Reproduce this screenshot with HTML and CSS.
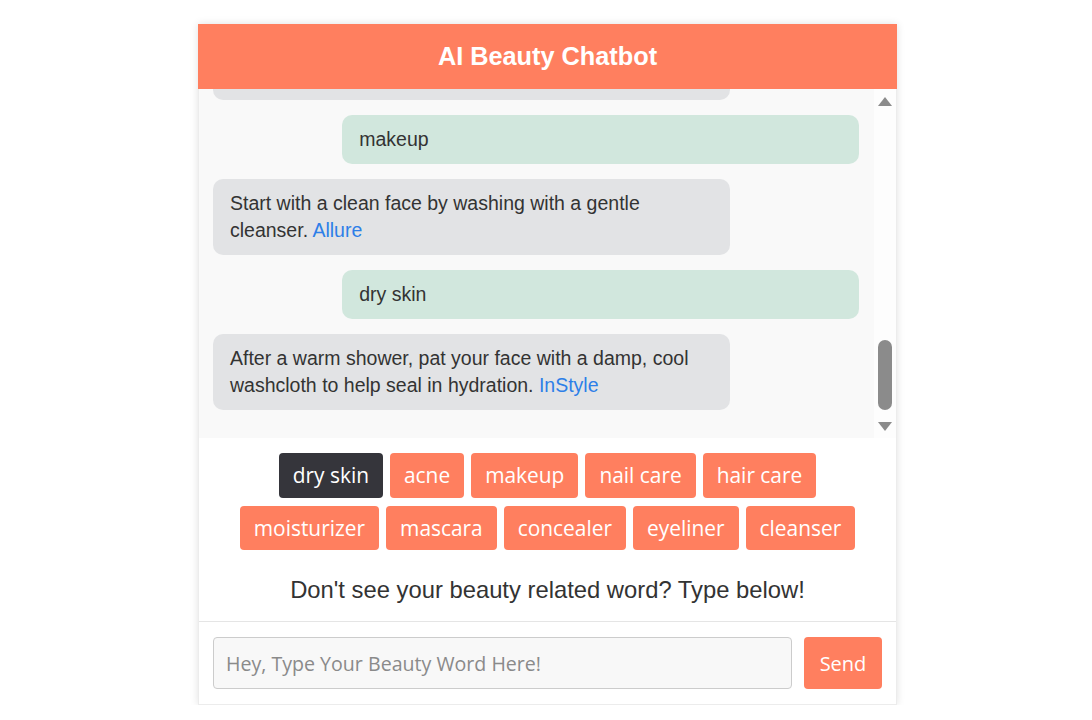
FILE: index.html
```html
<!DOCTYPE html>
<html lang="en">
<head>
<meta charset="utf-8">
<title>AI Beauty Chatbot</title>
<link rel="stylesheet" href="styles.css">
</head>
<body>
<div class="chat">
  <header class="chat-header">AI Beauty Chatbot</header>
  <div class="messages">
    <div class="scroller">
      <div class="msg-list">
        <div class="msg bot">Hi! I'm your AI beauty assistant. Pick a word below or type your own to get a tip.</div>
        <div class="msg user">acne</div>
        <div class="msg bot">Wash your face twice a day with a gentle, nonabrasive cleanser. <a href="#">Healthline</a></div>
        <div class="msg user">moisturizer</div>
        <div class="msg bot">Apply moisturizer to damp skin right after cleansing to lock in moisture. <a href="#">Byrdie</a></div>
        <div class="msg user">mascara</div>
        <div class="msg bot">Wiggle the wand at the base of your lashes, then sweep upward. <a href="#">Glamour</a></div>
        <div class="msg user">nail care</div>
        <div class="msg bot">Keep your nails clean and dry, and moisturize your cuticles daily. <a href="#">Mayo Clinic</a></div>
        <div class="msg user">concealer</div>
        <div class="msg bot">Dab concealer on with your ring finger and blend it outward. <a href="#">Vogue</a></div>
        <div class="msg user">hair care</div>
        <div class="msg bot">Use a wide-tooth comb on wet hair to prevent breakage and split ends. <a href="#">Allure</a></div>
        <div class="msg user">makeup</div>
        <div class="msg bot">Start with a clean face by washing with a gentle cleanser. <a href="#">Allure</a></div>
        <div class="msg user">dry skin</div>
        <div class="msg bot">After a warm shower, pat your face with a damp, cool washcloth to help seal in hydration. <a href="#">InStyle</a></div>
      </div>
    </div>
    <div class="scrollbar" aria-hidden="true">
      <div class="sb-btn"><span class="arrow-up"></span></div>
      <div class="sb-track"><div class="sb-thumb"></div></div>
      <div class="sb-btn"><span class="arrow-down"></span></div>
    </div>
  </div>
  <div class="chips">
    <button class="chip active">dry skin</button>
    <button class="chip">acne</button>
    <button class="chip">makeup</button>
    <button class="chip">nail care</button>
    <button class="chip">hair care</button>
    <button class="chip">moisturizer</button>
    <button class="chip">mascara</button>
    <button class="chip">concealer</button>
    <button class="chip">eyeliner</button>
    <button class="chip">cleanser</button>
  </div>
  <p class="hint">Don't see your beauty related word? Type below!</p>
  <form class="composer">
    <input class="composer-input" type="text" placeholder="Hey, Type Your Beauty Word Here!">
    <button class="send" type="button">Send</button>
  </form>
</div>
</body>
</html>
```

FILE: styles.css
```css
html, body {
  margin: 0;
  padding: 0;
  background: #ffffff;
}

body {
  font-family: "Liberation Sans", Arial, sans-serif;
  padding-top: 24px;
}

.chat {
  width: 699px;
  box-sizing: border-box;
  margin: 0 0 0 198px;
  background: #ffffff;
  border: 1px solid #ececec;
  border-top: none;
  box-shadow: 0 0 8px rgba(0, 0, 0, 0.12);
  display: flex;
  flex-direction: column;
}

.chat-header {
  background: #ff7f5f;
  color: #ffffff;
  font-weight: bold;
  font-size: 25.3px;
  text-align: center;
  height: 65px;
  line-height: 65px;
  margin: 0 -1px;
}

.messages {
  height: 349px;
  background: #f9f9f9;
  display: flex;
}

.scroller {
  flex: 1;
  min-width: 0;
  overflow-y: auto;
  scrollbar-width: none;
  display: flex;
  flex-direction: column-reverse;
}

.scrollbar {
  width: 22px;
  flex: none;
  background: #fdfdfd;
  display: flex;
  flex-direction: column;
}

.sb-btn {
  height: 24px;
  flex: none;
  display: flex;
  align-items: center;
  justify-content: center;
}

.arrow-up {
  width: 0;
  height: 0;
  margin-top: 1px;
  border-left: 7px solid transparent;
  border-right: 7px solid transparent;
  border-bottom: 9px solid #8b8b8b;
}

.arrow-down {
  width: 0;
  height: 0;
  border-left: 7px solid transparent;
  border-right: 7px solid transparent;
  border-top: 9px solid #8b8b8b;
}

.sb-track {
  flex: 1;
  display: flex;
  flex-direction: column;
  justify-content: flex-end;
}

.sb-thumb {
  height: 70px;
  margin: 0 4px 4px;
  background: #8b8b8b;
  border-radius: 7px;
}

.msg-list {
  display: flex;
  flex-direction: column;
  gap: 15px;
  padding: 15px 15px 28px 14px;
}

.msg {
  width: 80%;
  box-sizing: border-box;
  padding: 11px 17px;
  border-radius: 10px;
  font-size: 19.5px;
  line-height: 27px;
  color: #333333;
}

.msg.user {
  align-self: flex-end;
  background: #d1e7dd;
}

.msg.bot {
  align-self: flex-start;
  background: #e2e3e5;
}

.msg a {
  color: #2d7fe8;
  text-decoration: none;
}

.chips {
  display: flex;
  flex-wrap: wrap;
  justify-content: center;
  gap: 8px 7px;
  padding: 15px 30px 0;
}

.chip {
  font-family: "Open Sans", sans-serif;
  font-size: 20.9px;
  color: #ffffff;
  background: #ff7f5f;
  border: none;
  border-radius: 4px;
  height: 44.5px;
  padding: 0 14px;
  cursor: pointer;
}

.chip.active {
  background: #35353b;
}

.hint {
  margin: 0;
  padding: 26px 0 17px;
  line-height: 28px;
  text-align: center;
  font-size: 23.8px;
  color: #333333;
  border-bottom: 1px solid #e5e5e5;
}

.composer {
  display: flex;
  gap: 12px;
  padding: 15px 14px 15px 14px;
  margin: 0;
}

.composer-input {
  flex: 1;
  height: 52px;
  box-sizing: border-box;
  border: 1px solid #cccccc;
  border-radius: 4px;
  background: #f8f8f8;
  padding: 0 12px;
  font-family: "Open Sans", sans-serif;
  font-size: 19.6px;
  color: #333333;
}

.composer-input::placeholder {
  color: #8a8a8a;
}

.send {
  width: 78px;
  height: 52px;
  border: none;
  border-radius: 4px;
  background: #ff7f5f;
  color: #ffffff;
  font-family: "Open Sans", sans-serif;
  font-size: 20px;
  cursor: pointer;
}
```
